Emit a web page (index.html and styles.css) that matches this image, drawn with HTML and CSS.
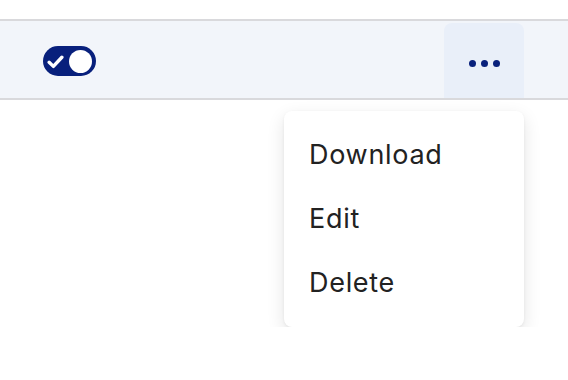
FILE: index.html
```html
<!DOCTYPE html>
<html lang="en">
<head>
  <meta charset="UTF-8" />
  <meta name="viewport" content="width=device-width, initial-scale=1.0"/>
  <title>Row actions</title>
  <link rel="stylesheet" href="styles.css">
</head>
<body>

  <div class="row">
    <button class="toggle" aria-label="Enabled">
      <svg class="check" viewBox="0 0 16 16" width="17" height="17">
        <path d="M2 8.8 L6 12.6 L14 4" fill="none" stroke="#fff" stroke-width="3.2" stroke-linecap="round" stroke-linejoin="round"/>
      </svg>
      <span class="knob"></span>
    </button>

    <button class="more-btn" aria-label="More actions">
      <span class="dot"></span><span class="dot"></span><span class="dot"></span>
    </button>
  </div>

  <!-- Dropdown menu -->
  <div class="menu-wrap">
    <div class="menu">
      <div class="menu-item">Download</div>
      <div class="menu-item">Edit</div>
      <div class="menu-item">Delete</div>
    </div>
  </div>

</body>
</html>
```

FILE: styles.css
```css
body {
  margin: 0;
  background: #ffffff;
  font-family: Inter, 'Noto Sans', sans-serif;
}

.row {
  margin-top: 19px;
  height: 77px;
  background: #f2f5fa;
  border-top: 2px solid #d9d9dc;
  border-bottom: 2px solid #d9d9dc;
  display: flex;
  align-items: flex-end;
  justify-content: space-between;
  padding: 0 44px 0 43px;
}

.toggle {
  align-self: center;
  width: 53px;
  height: 30px;
  margin-top: 3px;
  padding: 0 4px 0 4px;
  border: none;
  border-radius: 15px;
  background: #08207c;
  display: flex;
  align-items: center;
  justify-content: space-between;
  cursor: pointer;
}

.check {
  display: block;
}

.knob {
  width: 23px;
  height: 23px;
  border-radius: 50%;
  background: #ffffff;
}

.more-btn {
  width: 80px;
  height: 75px;
  border: none;
  border-radius: 8px 8px 0 0;
  background: #e9eff9;
  display: flex;
  justify-content: center;
  align-items: center;
  gap: 5px;
  padding: 6px 0 0;
  cursor: pointer;
}

.dot {
  width: 7px;
  height: 7px;
  border-radius: 50%;
  background: #08207c;
}

/* Dropdown */
.menu-wrap {
  display: flex;
  justify-content: flex-end;
  padding: 11px 44px 0 0;
}

.menu {
  width: 240px;
  padding: 12px 0;
  background: #ffffff;
  border-radius: 8px;
  box-shadow: 0 6px 18px rgba(0,0,0,0.11), 0 1px 3px rgba(0,0,0,0.06);
}

.menu-item {
  height: 64px;
  line-height: 64px;
  padding-left: 25px;
  font-size: 27px;
  letter-spacing: 0.7px;
  color: #222222;
  cursor: pointer;
}
```
